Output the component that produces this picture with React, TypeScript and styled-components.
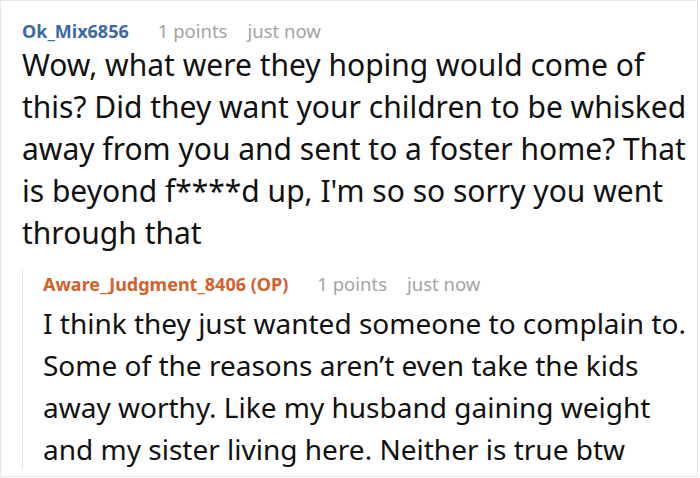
import React from "react";
import styled, { createGlobalStyle } from "styled-components";

const Global = createGlobalStyle`
  html, body { margin: 0; padding: 0; background: #fff; }
  body { font-family: "Noto Sans", "Open Sans", sans-serif; }
`;

const Frame = styled.div`
  box-sizing: border-box;
  width: 698px;
  height: 477px;
  border: 1px solid #e6e6e6;
  padding: 15px 0 0 21px;
  overflow: hidden;
`;

const Meta = styled.div`
  display: flex;
  align-items: baseline;
  line-height: 30px;
`;

const User = styled.span<{ $op?: boolean }>`
  font-size: 18px;
  font-weight: 700;
  color: ${(p) => (p.$op ? "#d2612b" : "#3a6aa6")};
`;

const Dim = styled.span<{ $gap: number }>`
  font-size: 18.5px;
  color: #a3a3a3;
  margin-left: ${(p) => p.$gap}px;
`;

const Body = styled.p<{ $size: number; $top: number }>`
  margin: ${(p) => p.$top}px 0 0;
  font-size: ${(p) => p.$size}px;
  line-height: 42px;
  color: #111;
`;

const Reply = styled.div`
  margin-top: 15px;
  border-left: 1px solid #e6e6e6;
  padding-left: 20px;
`;

function Comment({
  user,
  op,
  size,
  top,
  children,
}: {
  user: string;
  op?: boolean;
  size: number;
  top: number;
  children: React.ReactNode;
}) {
  return (
    <>
      <Meta>
        <User $op={op}>{user}</User>
        <Dim $gap={29}>1 points</Dim>
        <Dim $gap={20}>just now</Dim>
      </Meta>
      <Body $size={size} $top={top}>
        {children}
      </Body>
    </>
  );
}

export default function App() {
  return (
    <>
      <Global />
      <Frame>
        <Comment user="Ok_Mix6856" size={30} top={-2}>
          Wow, what were they hoping would come of
          <br />
          this? Did they want your children to be whisked
          <br />
          away from you and sent to a foster home? That
          <br />
          is beyond f****d up, I'm so so sorry you went
          <br />
          through that
        </Comment>
        <Reply>
          <Comment user="Aware_Judgment_8406 (OP)" op size={28} top={3}>
            I think they just wanted someone to complain to.
            <br />
            Some of the reasons aren’t even take the kids
            <br />
            away worthy. Like my husband gaining weight
            <br />
            and my sister living here. Neither is true btw
          </Comment>
        </Reply>
      </Frame>
    </>
  );
}
